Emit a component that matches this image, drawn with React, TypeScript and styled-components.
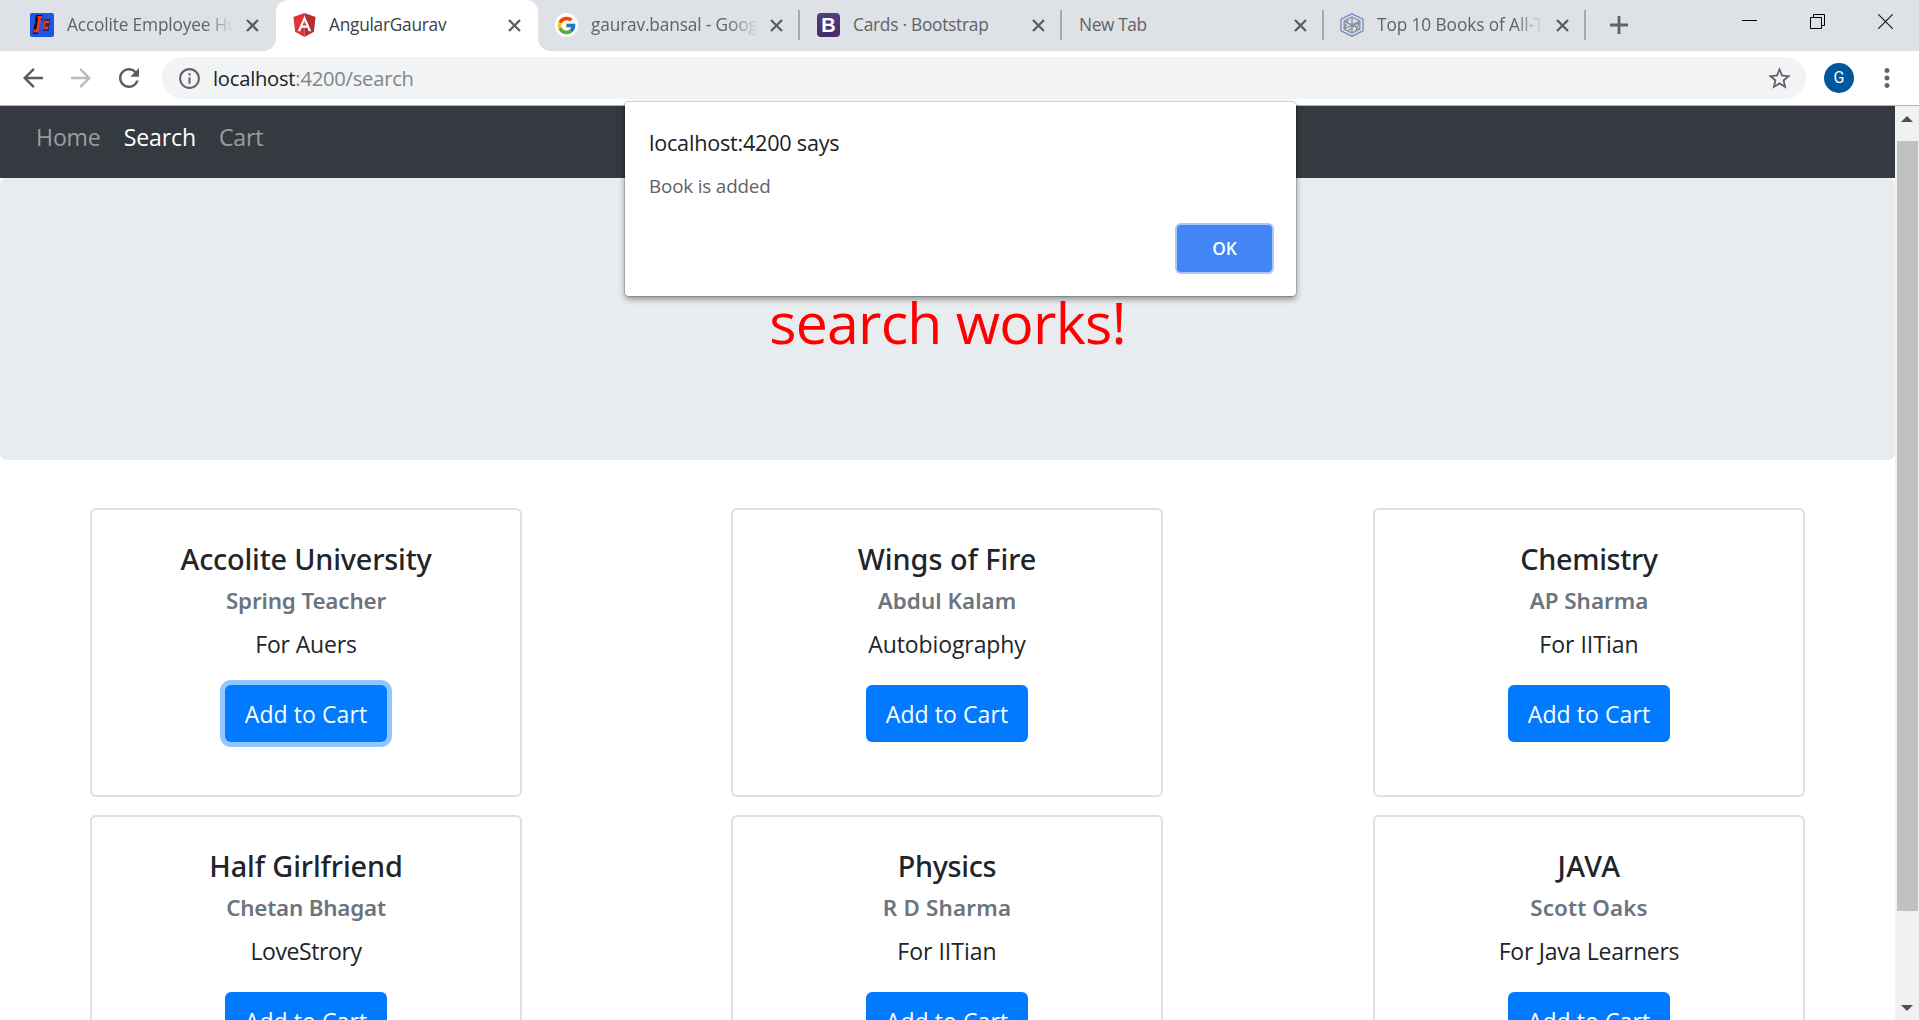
import React from 'react';
import styled, { createGlobalStyle, css } from 'styled-components';
import {
  MdArrowBack,
  MdArrowForward,
  MdInfoOutline,
  MdMoreVert,
  MdRefresh,
  MdStarBorder,
} from 'react-icons/md';
import { FcGoogle } from 'react-icons/fc';

const GlobalStyle = createGlobalStyle`
  *, *::before, *::after { box-sizing: border-box; }
  html, body { margin: 0; height: 100%; overflow: hidden; background: #fff; }
  body { font-family: "Open Sans", "Noto Sans", sans-serif; color: #212529; }
  #root { height: 100%; }
  button { font-family: inherit; border: 0; padding: 0; }
`;

const Window = styled.div`
  display: flex;
  flex-direction: column;
  height: 100vh;
  overflow: hidden;
`;

/* ---------- Tab strip ---------- */

const TabStrip = styled.div`
  display: flex;
  flex: none;
  height: 51px;
  padding-left: 14px;
  background: #dee1e6;
`;

const activeTab = css`
  background: #fff;
  border-radius: 12px 12px 0 0;
  color: #3c4043;

  &::before,
  &::after {
    content: '';
    position: absolute;
    bottom: 0;
    width: 12px;
    height: 12px;
  }
  &::before {
    left: -12px;
    background: radial-gradient(circle at 0 0, transparent 11.5px, #fff 12px);
  }
  &::after {
    right: -12px;
    background: radial-gradient(circle at 100% 0, transparent 11.5px, #fff 12px);
  }
`;

const TabBox = styled.div<{ $active?: boolean }>`
  position: relative;
  display: flex;
  align-items: center;
  width: 262px;
  height: 51px;
  padding: 0 0 1px 16px;
  color: #5f6368;
  ${p => p.$active && activeTab}
`;

const Divider = styled.span`
  width: 2px;
  height: 30px;
  margin-left: auto;
  background: #a6a9ad;
`;

const Favicon = styled.span`
  display: flex;
  flex: none;
  width: 24px;
  height: 24px;
  margin-right: 12px;
`;

const TabTitle = styled.span<{ $spacing: number; $fade?: boolean }>`
  flex: 1;
  min-width: 0;
  padding-left: 1px;
  overflow: hidden;
  white-space: nowrap;
  font-size: 17.3px;
  line-height: 26px;
  letter-spacing: ${p => p.$spacing}px;
  ${p => p.$fade && 'mask-image: linear-gradient(to right, #000 calc(100% - 30px), transparent);'}
`;

const TabClose = styled.span<{ $divided?: boolean }>`
  display: flex;
  flex: none;
  margin: 0 ${p => (p.$divided ? 15 : 17)}px 0 12px;
`;

const BootstrapMark = styled.span`
  display: flex;
  align-items: center;
  justify-content: center;
  width: 24px;
  height: 24px;
  margin-left: 1px;
  border-radius: 4px;
  background: linear-gradient(#563d7c, #452c68);
  color: #fff;
  font: 700 20px/24px "Liberation Sans", sans-serif;
`;

const GoogleMark = styled.span`
  display: flex;
  align-items: center;
  justify-content: center;
  width: 24px;
  height: 24px;
  margin-left: 1px;
  border-radius: 50%;
  background: #fff;
`;

const NewTabButton = styled.span`
  display: flex;
  align-items: center;
  margin-left: 24px;
  padding-bottom: 1px;
`;

const WindowControls = styled.div`
  display: flex;
  gap: 53px;
  margin: 13px 26px 0 auto;
`;

/* ---------- Toolbar ---------- */

const Toolbar = styled.div`
  display: flex;
  flex: none;
  align-items: flex-start;
  height: 55px;
  padding: 6px 17px 0 18px;
  background: #fff;
  border-bottom: 1px solid #b0b2b5;
`;

const NavIcon = styled.span<{ $muted?: boolean }>`
  display: flex;
  margin: 6px 18px 0 0;
  color: ${p => (p.$muted ? '#babcbe' : '#5a5e63')};
`;

const AddressBar = styled.div`
  display: flex;
  flex: 1;
  align-items: center;
  height: 42px;
  padding: 0 13px 0 15px;
  border-radius: 21px;
  background: #f1f3f4;
  color: #5f6368;
`;

const Url = styled.span`
  flex: 1;
  margin-left: 11px;
  font-size: 20.2px;
  line-height: 28px;
  letter-spacing: -0.25px;
  color: #80868b;
`;

const UrlHost = styled.span`
  color: #202124;
`;

const Avatar = styled.span`
  display: flex;
  align-items: center;
  justify-content: center;
  width: 30px;
  height: 30px;
  margin: 6px 18px 0;
  border-radius: 50%;
  background: #01579b;
  color: #fff;
  font: 400 16px/30px Roboto, sans-serif;
`;

const MenuDots = styled.span`
  display: flex;
  margin-top: 6px;
  color: #5f6368;
`;

/* ---------- Page ---------- */

const Viewport = styled.div`
  display: flex;
  flex: 1;
  min-height: 0;
`;

const Page = styled.main`
  flex: 1;
  min-width: 0;
  overflow: hidden;
`;

const Navbar = styled.nav`
  display: flex;
  gap: 23px;
  height: 72px;
  padding: 13px 0 0 36px;
  background: #343a40;
`;

const NavLink = styled.a<{ $active?: boolean }>`
  font-size: 23.1px;
  line-height: 37px;
  letter-spacing: -0.15px;
  color: ${p => (p.$active ? '#fff' : 'rgba(255, 255, 255, 0.5)')};
`;

const Jumbotron = styled.header`
  height: 282px;
  padding-top: 108px;
  border-radius: 7px;
  background: #e9ecef;
  text-align: center;
`;

const Heading = styled.h1`
  margin: 0;
  font-size: 57.2px;
  line-height: 72px;
  font-weight: 400;
  letter-spacing: -0.75px;
  color: #f00;
`;

const CardGrid = styled.section`
  display: grid;
  grid-template-columns: 641px 642px 432px;
  row-gap: 18px;
  padding: 48px 0 0 90px;
`;

const Card = styled.article`
  display: flex;
  flex-direction: column;
  align-items: center;
  width: 432px;
  height: 289px;
  padding-top: 31px;
  border: 2px solid #dfdfdf;
  border-radius: 6px;
  background: #fff;
`;

const CardTitle = styled.h5<{ $spacing: number }>`
  margin: 0 0 9px;
  font-family: "Noto Sans", sans-serif;
  font-size: 28.8px;
  font-weight: 500;
  line-height: 36px;
  letter-spacing: ${p => p.$spacing}px;
`;

const CardAuthor = styled.h6<{ $spacing: number }>`
  margin: 0 0 11px;
  font-family: "Noto Sans", sans-serif;
  font-size: 22.4px;
  font-weight: 600;
  line-height: 29px;
  letter-spacing: ${p => p.$spacing}px;
  color: #6c757d;
`;

const CardText = styled.p<{ $spacing: number }>`
  margin: 0 0 22px;
  font-size: 23px;
  line-height: 37px;
  letter-spacing: ${p => p.$spacing}px;
`;

const AddButton = styled.button<{ $focused?: boolean }>`
  width: 162px;
  height: 57px;
  border-radius: 6px;
  background: #007bff;
  color: #fff;
  font-size: 23px;
  letter-spacing: 0.07px;
  ${p => p.$focused && 'box-shadow: 0 0 0 5px #92c6ff;'}
`;

const Scrollbar = styled.div`
  display: flex;
  flex-direction: column;
  align-items: center;
  flex: none;
  width: 24px;
  padding: 10px 0 9px;
  background: #f1f1f1;
`;

const ScrollArrow = styled.span<{ $down?: boolean }>`
  border: 6px solid transparent;
  border-${p => (p.$down ? 'top' : 'bottom')}-color: #505050;
  border-${p => (p.$down ? 'bottom' : 'top')}-width: 0;
`;

const ScrollThumb = styled.span`
  width: 21px;
  height: 770px;
  margin: 19px 0 auto;
  background: #c1c1c1;
`;

/* ---------- Alert dialog ---------- */

const Dialog = styled.div`
  position: absolute;
  top: 102px;
  left: 625px;
  display: flex;
  flex-direction: column;
  width: 671px;
  height: 194px;
  padding: 25px 22px 0 24px;
  border-radius: 4px;
  background: #fff;
  box-shadow: 0 0 0 1px rgba(0, 0, 0, 0.14), 0 3px 6px rgba(0, 0, 0, 0.42);
`;

const DialogTitle = styled.div`
  font-size: 21.6px;
  line-height: 32px;
  letter-spacing: -0.22px;
  color: #202124;
`;

const DialogMessage = styled.div`
  margin-top: 13px;
  font-size: 18.8px;
  line-height: 28px;
  letter-spacing: -0.15px;
  color: #5f6368;
`;

const OkButton = styled.button`
  align-self: flex-end;
  width: 99px;
  height: 51px;
  margin-top: 23px;
  border: 2px solid #a9c7fa;
  border-radius: 6px;
  background: #4285f4;
  color: #fff;
  font-size: 17.3px;
  font-weight: 600;
`;

/* ---------- Drawings ---------- */

const CloseIcon = () => (
  <svg width="13" height="13" viewBox="0 0 13 13" stroke="#5a5e63" strokeWidth="2.3">
    <path d="M1 1l11 11M12 1L1 12" />
  </svg>
);

const AccoliteIcon = () => (
  <svg width="24" height="24" viewBox="0 0 24 24" fill="none">
    <rect width="24" height="24" rx="2" fill="#1f55e6" />
    <g stroke="#14090f" strokeWidth="4.8">
      <path d="M12.400 4.500H8L5.800 18.600H3" />
      <path d="M19.800 9h-5.400M18.600 15h-5.400" />
    </g>
    <g stroke="#f03a22">
      <path d="M12.200 4.400H7.600M9.800 4.400L7.400 18H3.400" strokeWidth="2.8" />
      <path d="M19.400 9h-4.800M18.200 15h-4.800" strokeWidth="2.800" />
      <path d="M15 9l-1.200 6" strokeWidth="1.400" />
    </g>
  </svg>
);

const AngularIcon = () => (
  <svg width="24" height="24" viewBox="0 0 24 24">
    <path d="M12.500 0L1.400 4l1.700 14.700L12.500 24z" fill="#e23237" />
    <path d="M12.500 0l11.100 4-1.700 14.700L12.500 24z" fill="#b52e31" />
    <path
      d="M12.500 2.800L5.700 18.200h2.600l1.400-3.500h5.600l1.400 3.500h2.600zm0 5.300l2 4.500h-4z"
      fill="#fff"
    />
  </svg>
);

const BooksIcon = () => (
  <svg width="24" height="24" viewBox="0 0 24 24" fill="none">
    <path d="M12 .8l11 5.400v11.600l-11 5.400-11-5.400V6.200z" stroke="#7486c8" strokeWidth="1.300" />
    <g stroke="#87919d" strokeWidth="1.400">
      <path d="M12 4l7.800 4v8L12 20l-7.800-4V8z" />
      <path d="M12 4v16M4.200 8.500L12 12l7.800-3.500M4.200 16l4-9.500M19.800 8l-4 10M4.200 16L12 12l7.800 4M8 18L19.800 8" />
    </g>
  </svg>
);

const PlusIcon = () => (
  <svg width="18" height="18" viewBox="0 0 18 18" stroke="#5f6368" strokeWidth="2.8">
    <path d="M0 9h18M9 0v18" />
  </svg>
);

const MinimizeIcon = () => (
  <svg width="15" height="16" viewBox="0 0 15 16" stroke="#000">
    <path d="M0 7.500h15" />
  </svg>
);

const RestoreIcon = () => (
  <svg width="15" height="16" viewBox="0 0 15 16" fill="none" stroke="#000">
    <path d="M.5 4.500h11v11H.5zM3.500 4.500v-3h11v11h-3" />
  </svg>
);

const WindowCloseIcon = () => (
  <svg width="15" height="16" viewBox="0 0 15 16" stroke="#111" strokeWidth="1.200">
    <path d="M.3 1.300l14.400 14.400M14.700 1.300L.3 15.700" />
  </svg>
);

/* ---------- Data ---------- */

interface TabData {
  title: string;
  icon?: React.ReactNode;
  spacing: number;
  active?: boolean;
  divider?: boolean;
  fade?: boolean;
}

const tabs: TabData[] = [
  { title: 'Accolite Employee Hu', icon: <AccoliteIcon />, spacing: -0.15, fade: true },
  { title: 'AngularGaurav', icon: <AngularIcon />, spacing: -0.25, active: true },
  {
    title: 'gaurav.bansal - Goog',
    icon: <GoogleMark><FcGoogle size={21} /></GoogleMark>,
    spacing: -0.15,
    divider: true,
    fade: true,
  },
  { title: 'Cards · Bootstrap', icon: <BootstrapMark>B</BootstrapMark>, spacing: -0.24, divider: true },
  { title: 'New Tab', spacing: -0.35, divider: true },
  { title: 'Top 10 Books of All-T', icon: <BooksIcon />, spacing: -0.1, divider: true, fade: true },
];

interface Book {
  title: string;
  author: string;
  text: string;
  spacing: [number, number, number];
}

const books: Book[] = [
  { title: 'Accolite University', author: 'Spring Teacher', text: 'For Auers', spacing: [-0.17, -0.15, -0.16] },
  { title: 'Wings of Fire', author: 'Abdul Kalam', text: 'Autobiography', spacing: [0, 0.05, -0.1] },
  { title: 'Chemistry', author: 'AP Sharma', text: 'For IITian', spacing: [-0.34, 0, 0] },
  { title: 'Half Girlfriend', author: 'Chetan Bhagat', text: 'LoveStrory', spacing: [-0.1, -0.2, -0.4] },
  { title: 'Physics', author: 'R D Sharma', text: 'For IITian', spacing: [-0.3, 0.2, 0] },
  { title: 'JAVA', author: 'Scott Oaks', text: 'For Java Learners', spacing: [0.4, 0.1, -0.24] },
];

export default function App() {
  return (
    <Window>
      <GlobalStyle />
      <TabStrip>
        {tabs.map(tab => (
          <TabBox key={tab.title} $active={tab.active}>
            {tab.icon && <Favicon>{tab.icon}</Favicon>}
            <TabTitle $spacing={tab.spacing} $fade={tab.fade}>{tab.title}</TabTitle>
            <TabClose $divided={tab.divider}><CloseIcon /></TabClose>
            {tab.divider && <Divider />}
          </TabBox>
        ))}
        <NewTabButton><PlusIcon /></NewTabButton>
        <WindowControls>
          <MinimizeIcon />
          <RestoreIcon />
          <WindowCloseIcon />
        </WindowControls>
      </TabStrip>

      <Toolbar>
        <NavIcon><MdArrowBack size={30} /></NavIcon>
        <NavIcon $muted><MdArrowForward size={30} /></NavIcon>
        <NavIcon><MdRefresh size={30} /></NavIcon>
        <AddressBar>
          <MdInfoOutline size={25} />
          <Url><UrlHost>localhost</UrlHost>:4200/search</Url>
          <MdStarBorder size={27} />
        </AddressBar>
        <Avatar>G</Avatar>
        <MenuDots><MdMoreVert size={30} /></MenuDots>
      </Toolbar>

      <Viewport>
        <Page>
          <Navbar>
            <NavLink>Home</NavLink>
            <NavLink $active>Search</NavLink>
            <NavLink>Cart</NavLink>
          </Navbar>
          <Jumbotron>
            <Heading>search works!</Heading>
          </Jumbotron>
          <CardGrid>
            {books.map((book, index) => (
              <Card key={book.title}>
                <CardTitle $spacing={book.spacing[0]}>{book.title}</CardTitle>
                <CardAuthor $spacing={book.spacing[1]}>{book.author}</CardAuthor>
                <CardText $spacing={book.spacing[2]}>{book.text}</CardText>
                <AddButton $focused={index === 0}>Add to Cart</AddButton>
              </Card>
            ))}
          </CardGrid>
        </Page>
        <Scrollbar>
          <ScrollArrow />
          <ScrollThumb />
          <ScrollArrow $down />
        </Scrollbar>
      </Viewport>

      <Dialog role="alertdialog">
        <DialogTitle>localhost:4200 says</DialogTitle>
        <DialogMessage>Book is added</DialogMessage>
        <OkButton>OK</OkButton>
      </Dialog>
    </Window>
  );
}
